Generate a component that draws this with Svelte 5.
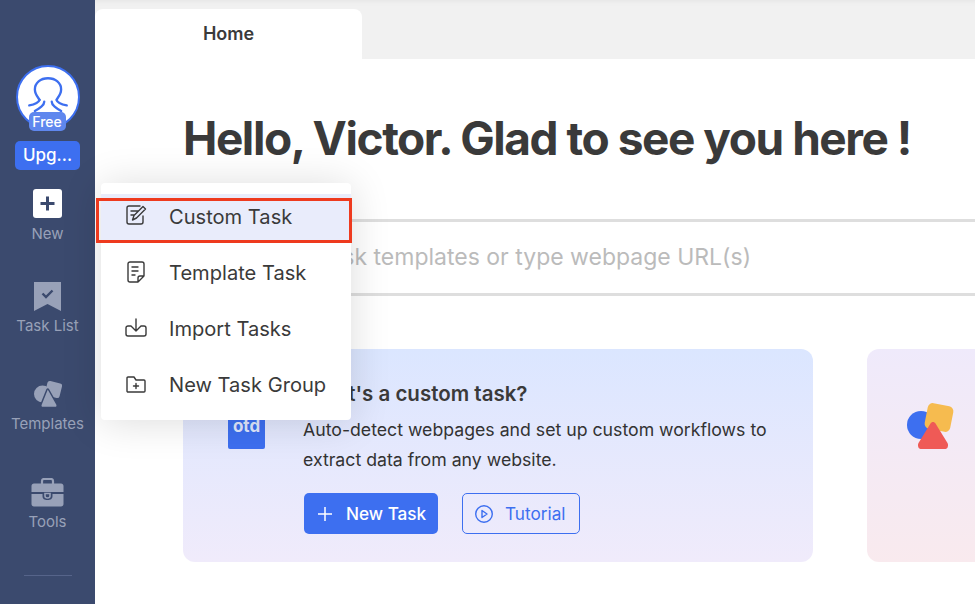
<script>
  const menu = ['Custom Task', 'Template Task', 'Import Tasks', 'New Task Group'];
</script>

<div class="app">
  <aside class="side">
    <div class="avatar">
      <svg viewBox="0 0 64 64" width="60" height="60" fill="none" stroke="#3d6ff0" stroke-width="2.500" stroke-linecap="round" stroke-linejoin="round">
        <path d="M23 35C21 32 18 29 18 24C18 17 24 12 32 12C40 12 46 17 46 24C46 29 43 32 41 35C42 38 47 40 52 41"/>
        <path d="M23 35C22 38 17 40 12 41"/>
        <path d="M28 37C28 41 23 44 18 47M36 37C36 41 41 44 46 47"/>
      </svg>
      <span class="free">Free</span>
    </div>
    <div class="upg">Upg...</div>

    <div class="nav new">
      <svg class="nav-icon" viewBox="0 0 29 29" width="29" height="29">
        <rect width="29" height="29" rx="3" fill="#fff"/>
        <path d="M14.500 7.500v14M7.500 14.500h14" stroke="#3b4a6e" stroke-width="3"/>
      </svg>
      <span>New</span>
    </div>
    <div class="nav list">
      <svg class="nav-icon" viewBox="0 0 29 29" width="29" height="29">
        <path d="M1 0h27v29l-13.500-7L1 29z" fill="#98a1b8"/>
        <path d="M9.500 11.500l3.500 3.500 6.500-6.500" fill="none" stroke="#3b4a6e" stroke-width="2.400"/>
      </svg>
      <span>Task List</span>
    </div>
    <div class="nav tpl">
      <svg class="nav-icon" viewBox="0 0 29 29" width="29" height="29">
        <circle cx="9.500" cy="14" r="8.500" fill="#98a1b8"/>
        <rect x="13" y="2" width="15" height="15" rx="2.500" fill="#98a1b8" transform="rotate(14 20.500 9.500)"/>
        <path d="M15.500 9.500l8.500 15c.6 1.200 0 3-1.500 3h-13c-1.500 0-2.100-1.800-1.500-3l6-15c.4-.7 1.100-.7 1.500 0z" fill="#98a1b8" stroke="#3b4a6e" stroke-width="1.500"/>
      </svg>
      <span>Templates</span>
    </div>
    <div class="nav tools">
      <svg class="nav-icon" viewBox="0 0 33 29" width="33" height="29">
        <path d="M11 6V3c0-1 1-2 2-2h7c1 0 2 1 2 2v3" fill="none" stroke="#98a1b8" stroke-width="2.200"/>
        <path d="M3 5.500h27c1.500 0 2.500 1 2.500 2.500v6h-32V8c0-1.500 1-2.500 2.500-2.500zM.5 16h11v2c0 3 2 4 5 4s5-1 5-4v-2h11v10c0 1.500-1 2.500-2.500 2.500H3C1.500 28.500.5 27.500.5 26z" fill="#98a1b8"/>
        <path d="M14 15.500h5V18c0 1.500-1 2-2.500 2s-2.500-.5-2.500-2z" fill="none" stroke="#98a1b8" stroke-width="1.600"/>
      </svg>
      <span>Tools</span>
    </div>
    <div class="divider"></div>
  </aside>

  <main class="main">
    <div class="tabs">
      <div class="tab">Home</div>
      <div class="tab-rest"></div>
    </div>

    <section class="content">
      <h1>Hello, Victor. Glad to see you here !</h1>
      <div class="search">Search task templates or type webpage URL(s)</div>

      <div class="cards">
        <article class="card one">
          <div class="logo">otd</div>
          <div class="body">
            <h2>What's a custom task?</h2>
            <p>Auto-detect webpages and set up custom workflows to extract data from any website.</p>
            <div class="actions">
              <div class="btn primary">
                <svg viewBox="0 0 16 16" width="16" height="16"><path d="M8 1v14M1 8h14" stroke="#fff" stroke-width="1.500"/></svg>
                New Task
              </div>
              <div class="btn outline">
                <svg viewBox="0 0 20 20" width="20" height="20" fill="none" stroke="#3d6ff0" stroke-width="1.400"><circle cx="10" cy="10" r="8.300"/><path d="M8 6.500l5 3.500-5 3.500z" stroke-linejoin="round"/></svg>
                Tutorial
              </div>
            </div>
          </div>
        </article>
        <article class="card two">
          <svg viewBox="0 0 52 52" width="52" height="52">
            <circle cx="16" cy="25" r="14" fill="#3d6ff0"/>
            <rect x="21" y="4.500" width="26" height="26" rx="5" fill="#f6bb4f" transform="rotate(11 34 17.500)"/>
            <path d="M25.500 23.500c1.300-2 3.700-2 5 0L42.500 43c1.200 2.200.2 6-2 6h-25c-2.200 0-3.200-3.800-2-6z" fill="#ef5a56"/>
          </svg>
        </article>
      </div>
    </section>
  </main>

  <div class="menu">
    {#each menu as item, i}
      <div class="item" class:active={i === 0}>
        <svg class={'mi mi' + i} viewBox="0 0 22 22" width="22" height="22" fill="none" stroke="#3a3a3a" stroke-width="1.400" stroke-linecap="round" stroke-linejoin="round">
          {#if i === 0}
            <path d="M15 2H4a2 2 0 0 0-2 2v14a2 2 0 0 0 2 2h12a2 2 0 0 0 2-2v-6"/>
            <path d="M6 7h7M6 11h3M7.500 16l1.500-4.500 9-9 2.500 2.500-9 9z"/>
          {:else if i === 1}
            <path d="M5 1h12a2 2 0 0 1 2 2v12l-6 6H5a2 2 0 0 1-2-2V3a2 2 0 0 1 2-2zM19 15h-4a2 2 0 0 0-2 2v4"/>
            <path d="M7 6h6M7 10h6M7 14h3"/>
          {:else if i === 2}
            <path d="M11 2v12M6.500 9.500L11 14l4.500-4.500"/>
            <path d="M6 9H3a2 2 0 0 0-2 2v6a2 2 0 0 0 2 2h16a2 2 0 0 0 2-2v-6a2 2 0 0 0-2-2h-3"/>
          {:else}
            <path d="M2 18V5a1 1 0 0 1 1-1h6l2 3h8a1 1 0 0 1 1 1v10a1 1 0 0 1-1 1H3a1 1 0 0 1-1-1z"/>
            <path d="M8.500 13h5M11 10.500v5"/>
          {/if}
        </svg>
        <span>{item}</span>
      </div>
    {/each}
  </div>
  <div class="redbox"></div>
</div>

<style>
  :global(body) { margin: 0; background: #fff; }
  .app {
    position: relative;
    display: flex;
    width: 975px;
    height: 604px;
    overflow: hidden;
    font-family: Inter, "Liberation Sans", sans-serif;
    color: #3a3a3a;
  }
  .side {
    width: 95px;
    flex: none;
    background: #3b4a6e;
    display: flex;
    flex-direction: column;
    align-items: center;
    padding-top: 65px;
    box-sizing: border-box;
  }
  .avatar {
    position: relative;
    width: 60px;
    height: 60px;
    border: 2px solid #3d6ff0;
    border-radius: 50%;
    background: #fff;
  }
  .avatar svg { display: block; }
  .free {
    position: absolute;
    left: 11px;
    top: 45px;
    width: 37px;
    height: 19px;
    border-radius: 5px;
    background: #5f87ee;
    color: #fff;
    font-size: 14px;
    font-weight: 500;
    line-height: 19px;
    text-align: center;
  }
  .upg {
    width: 65px;
    height: 29px;
    margin-top: 12px;
    border-radius: 5px;
    background: #3d6ff0;
    color: #fff;
    font-size: 17px;
    font-weight: 500;
    line-height: 29px;
    text-align: center;
  }
  .nav {
    display: flex;
    flex-direction: column;
    align-items: center;
    color: #98a1b8;
    font-size: 15px;
    line-height: 18px;
  }
  .nav-icon { display: block; margin-bottom: 6px; }
  .nav.new { margin-top: 19px; }
  .nav.new .nav-icon { margin-bottom: 7px; }
  .nav.list { margin-top: 39px; }
  .nav.tpl { margin-top: 45px; }
  .nav.tools { margin-top: 45px; }
  .divider {
    width: 48px;
    height: 1px;
    margin-top: 44px;
    background: #56648a;
  }
  .main {
    flex: 1;
    min-width: 0;
    display: flex;
    flex-direction: column;
  }
  .tabs {
    display: flex;
    height: 59px;
    flex: none;
    background: #f1f1f1;
    padding-top: 9px;
    box-sizing: border-box;
    box-shadow: inset 0 6px 6px -6px #e0e0e0;
  }
  .tab {
    width: 267px;
    height: 50px;
    background: #fff;
    border-radius: 8px 8px 0 0;
    font-size: 18px;
    font-weight: 600;
    text-align: center;
    box-sizing: border-box;
    line-height: 49px;
  }
  .tab-rest {
    flex: 1;
    background: #f1f1f1;
    border-bottom-left-radius: 8px;
  }
  .content {
    padding: 46px 0 0 88px;
    flex: 1;
    min-height: 0;
  }
  h1 {
    margin: 0;
    font-size: 46px;
    font-weight: 700;
    line-height: 66px;
    white-space: nowrap;
    letter-spacing: -1.450px;
  }
  .search {
    margin-top: 48px;
    height: 71px;
    border-top: 3px solid #dedede;
    border-bottom: 3px solid #dedede;
    color: #bbb;
    font-size: 23px;
    line-height: 71px;
    padding-left: 56px;
    white-space: nowrap;
  }
  .cards {
    display: flex;
    gap: 54px;
    margin-top: 53px;
  }
  .card {
    flex: none;
    height: 213px;
    border-radius: 12px;
    box-sizing: border-box;
  }
  .one {
    width: 630px;
    display: flex;
    background: linear-gradient(#dbe6ff, #f0ebfb);
    padding: 31px 0 0 45px;
  }
  .two {
    width: 300px;
    background: linear-gradient(#efeafb, #f9eaee);
    padding: 51px 0 0 38px;
  }
  .two svg { display: block; }
  .logo {
    width: 37px;
    height: 69px;
    flex: none;
    margin-right: 38px;
    background: #3d6ff0;
    border-radius: 2px;
    color: #dfe7fd;
    font-size: 17px;
    font-weight: 700;
    line-height: 92px;
    text-align: center;
    overflow: hidden;
  }
  .body { width: 500px; }
  h2 {
    margin: 0;
    font-size: 20.500px;
    font-weight: 600;
    line-height: 28px;
  }
  p {
    margin: 7px 0 0;
    width: 490px;
    font-size: 17.700px;
    line-height: 30px;
    color: #333;
  }
  .actions {
    display: flex;
    gap: 24px;
    margin: 18px 0 0 1px;
  }
  .btn {
    display: flex;
    align-items: center;
    height: 41px;
    border-radius: 5px;
    box-sizing: border-box;
    font-size: 17.200px;
    font-weight: 500;
  }
  .primary {
    width: 134px;
    gap: 13px;
    padding-left: 13px;
    background: #3d6ff0;
    color: #fff;
  }
  .outline {
    width: 118px;
    gap: 11px;
    padding-left: 11px;
    border: 1.500px solid #3d6ff0;
    color: #3d6ff0;
    font-weight: 400;
  }
  .menu {
    position: absolute;
    left: 101px;
    top: 183px;
    width: 250px;
    height: 237px;
    padding-top: 6px;
    box-sizing: border-box;
    background: #fff;
    border-radius: 4px;
    box-shadow: 0 2px 40px rgba(0, 0, 0, 0.14);
  }
  .item {
    display: flex;
    align-items: center;
    gap: 22px;
    height: 56px;
    padding-left: 24px;
    font-size: 20.100px;
    color: #3a3a3a;
  }
  .mi { flex: none; margin-bottom: 3px; }
  .mi0 { margin-bottom: 5px; }
  .item.active {
    height: 46px;
    margin: 5px 0;
    background: #e9ecfb;
  }
  .redbox {
    position: absolute;
    left: 96px;
    top: 198px;
    width: 256px;
    height: 45px;
    box-sizing: border-box;
    border: 3px solid #ee3a1e;
  }
</style>
